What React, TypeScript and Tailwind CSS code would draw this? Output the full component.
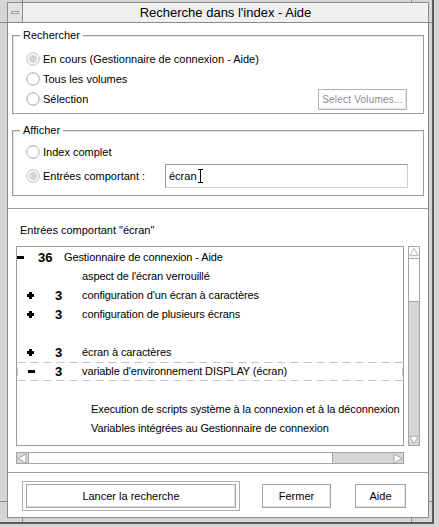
const font = "font-['Liberation_Sans',Arial,sans-serif]";

type Row =
  | { kind: "l1" | "l2"; sign: "plus" | "minus"; num: string; text: string; focus?: boolean }
  | { kind: "l2text" | "l3"; text: string }
  | { kind: "blank" };

const rows: Row[] = [
  { kind: "l1", sign: "minus", num: "36", text: "Gestionnaire de connexion - Aide" },
  { kind: "l2text", text: "aspect de l'écran verrouillé" },
  { kind: "l2", sign: "plus", num: "3", text: "configuration d'un écran à caractères" },
  { kind: "l2", sign: "plus", num: "3", text: "configuration de plusieurs écrans" },
  { kind: "blank" },
  { kind: "l2", sign: "plus", num: "3", text: "écran à caractères" },
  { kind: "l2", sign: "minus", num: "3", text: "variable d'environnement DISPLAY (écran)", focus: true },
  { kind: "blank" },
  { kind: "l3", text: "Execution de scripts système à la connexion et à la déconnexion" },
  { kind: "l3", text: "Variables intégrées au Gestionnaire de connexion" },
];

function Radio({ on }: { on?: boolean }) {
  return (
    <svg width="14" height="14" viewBox="0 0 14 14" className="shrink-0">
      <circle cx="7" cy="7" r="6.2" fill="#fff" stroke={on ? "#b8b8b8" : "#a4a4a4"} />
      {on && <circle cx="7" cy="7" r="4.2" fill="#d6d6d6" />}
    </svg>
  );
}

function Sign({ type }: { type: "plus" | "minus" }) {
  return (
    <svg width="7" height="7" viewBox="0 0 7 7">
      <rect x="0" y="2" width="7" height="3" fill="#000" />
      {type === "plus" && <rect x="2" y="0" width="3" height="7" fill="#000" />}
    </svg>
  );
}

function Arrow({ dir }: { dir: "up" | "down" | "left" | "right" }) {
  const pts = {
    up: "1,9 5.5,1 10,9",
    down: "1,2 5.5,10 10,2",
    left: "9,1 1,5.5 9,10",
    right: "2,1 10,5.5 2,10",
  }[dir];
  return (
    <svg width="11" height="11" viewBox="0 0 11 11">
      <polygon points={pts} fill="#fff" stroke="#a8a8a8" strokeWidth="1" />
    </svg>
  );
}

function GroupBox({ label, className, children }: { label: string; className: string; children: React.ReactNode }) {
  return (
    <div className={`relative mx-[4px] border border-[#9c9c9c] shadow-[inset_1px_1px_0_#e4e4e4] ${className}`}>
      <span className="absolute -top-[8px] left-[7px] bg-white px-[3px] text-[11px] leading-[14px] text-black">
        {label}
      </span>
      {children}
    </div>
  );
}

function Button({ label, className }: { label: string; className: string }) {
  return (
    <div
      className={`flex h-[24px] items-center justify-center border border-[#a4a4a4] bg-white text-[11px] text-black shadow-[inset_-1px_-1px_0_#e2e2e2] ${className}`}
    >
      {label}
    </div>
  );
}

export default function App() {
  return (
    <div className={`relative h-[527px] w-[439px] overflow-hidden bg-[#d6d6d6] ${font}`}>
      <div className="relative flex h-[524px] w-[434px] flex-col border-b-2 border-r-2 border-[#5a5a5a] bg-[#d6d6d6] pb-[4px] pl-[7px] pr-[3px] pt-[2px]">
        {/* frame resize ticks */}
        <div className="absolute left-[22px] top-0 h-[2px] w-px bg-[#8a8a8a]" />
        <div className="absolute right-[20px] top-0 h-[2px] w-px bg-[#8a8a8a]" />
        <div className="absolute bottom-0 left-[22px] h-[4px] w-px bg-[#8a8a8a]" />
        <div className="absolute bottom-0 right-[20px] h-[4px] w-px bg-[#8a8a8a]" />
        <div className="absolute left-0 top-[22px] h-px w-[7px] bg-[#8a8a8a]" />
        <div className="absolute bottom-[20px] left-0 h-px w-[7px] bg-[#8a8a8a]" />
        <div className="absolute right-0 top-[22px] h-px w-[3px] bg-[#8a8a8a]" />
        <div className="absolute bottom-[20px] right-0 h-px w-[3px] bg-[#8a8a8a]" />

        {/* title bar */}
        <div className="flex h-[20px] border-l border-t border-[#8e8e8e]">
          <div className="flex w-[15px] items-center justify-center border-r border-[#8e8e8e] bg-[#e2e2e2]">
            <div className="h-[3px] w-[8px] border border-[#9a9a9a] bg-[#f4f4f4]" />
          </div>
          <div className="flex flex-1 items-center justify-center border-r border-[#8e8e8e] bg-[#efefef] text-[13px] text-black">
            Recherche dans l'index - Aide
          </div>
        </div>

        {/* client area */}
        <div className="flex flex-1 flex-col whitespace-nowrap border border-[#8a8a8a] bg-white text-[11px] text-black">
          <GroupBox label="Rechercher" className="mt-[12px] h-[79px] pt-[13px]">
            <div className="flex h-[20px] items-center gap-[3px] pl-[13px]">
              <Radio on />
              <span>En cours (Gestionnaire de connexion - Aide)</span>
            </div>
            <div className="flex h-[20px] items-center gap-[3px] pl-[13px]">
              <Radio />
              <span>Tous les volumes</span>
            </div>
            <div className="flex h-[20px] items-center gap-[3px] pl-[13px] pr-[16px]">
              <Radio />
              <span>Sélection</span>
              <div className="ml-auto flex h-[21px] w-[89px] items-center justify-center border border-[#b4b4b4] text-[10px] tracking-[0.2px] text-[#8c8c8c] shadow-[inset_-1px_-1px_0_#e6e6e6]">
                Select Volumes...
              </div>
            </div>
          </GroupBox>

          <GroupBox label="Afficher" className="mt-[16px] h-[66px] pt-[11px]">
            <div className="flex h-[20px] items-center gap-[3px] pl-[13px]">
              <Radio />
              <span>Index complet</span>
            </div>
            <div className="mt-[2px] flex h-[24px] items-center gap-[3px] pl-[13px] pr-[15px]">
              <Radio on />
              <span>Entrées comportant :</span>
              <div className="ml-auto flex h-[24px] w-[243px] items-center border-b border-l border-r border-t border-b-[#cfcfcf] border-l-[#9a9a9a] border-r-[#cfcfcf] border-t-[#9a9a9a] pl-[3px]">
                <span>écran</span>
                <svg width="5" height="14" viewBox="0 0 5 14" className="ml-[1px]">
                  <path d="M0 0.5H5M2.5 0.5V13.5M0 13.5H5" stroke="#000" strokeWidth="1" fill="none" />
                </svg>
              </div>
            </div>
          </GroupBox>

          <div className="mt-[12px] h-px bg-[#9c9c9c]" />

          <div className="mt-[14px] h-[14px] pl-[12px] leading-[14px]">Entrées comportant "écran"</div>

          <div className="ml-[8px] mt-[9px] flex gap-[4px]">
            <div className="h-[200px] w-[388px] overflow-hidden border border-[#9c9c9c] pt-px tracking-[-0.1px]">
              {rows.map((r, i) => {
                if (r.kind === "blank") return <div key={i} className="h-[19px]" />;
                if (r.kind === "l2text")
                  return (
                    <div key={i} className="flex h-[19px] items-center pl-[65px]">
                      {r.text}
                    </div>
                  );
                if (r.kind === "l3")
                  return (
                    <div key={i} className="flex h-[19px] items-center pl-[74px]">
                      {r.text}
                    </div>
                  );
                const l1 = r.kind === "l1";
                return (
                  <div key={i} className={`relative flex h-[19px] items-center ${l1 ? "" : "pl-[10px]"}`}>
                    {r.focus && (
                      <svg className="absolute inset-0" width="386" height="19">
                        <rect x="0.5" y="0.5" width="385" height="18" fill="none" stroke="#c4c4c4" strokeDasharray="8 5" />
                      </svg>
                    )}
                    <div className={`flex items-center ${l1 ? "w-[21px]" : r.focus ? "w-[28px] pl-px" : "w-[28px]"}`}>
                      <Sign type={r.sign} />
                    </div>
                    <div className={`text-[13px] font-bold leading-none ${l1 ? "w-[26px]" : "w-[27px]"}`}>{r.num}</div>
                    <span className="relative">{r.text}</span>
                  </div>
                );
              })}
            </div>

            {/* vertical scrollbar */}
            <div className="flex h-[200px] w-[12px] flex-col border border-[#a4a4a4] bg-[#d6d6d6]">
              <div className="flex h-[11px] items-center justify-center bg-white">
                <Arrow dir="up" />
              </div>
              <div className="h-[44px] border-b border-t border-[#a4a4a4] bg-white" />
              <div className="flex-1" />
              <div className="flex h-[11px] items-center justify-center">
                <Arrow dir="down" />
              </div>
            </div>
          </div>

          {/* horizontal scrollbar */}
          <div className="ml-[8px] mt-[6px] flex h-[12px] w-[388px] border border-[#a4a4a4] bg-[#d6d6d6]">
            <div className="flex w-[11px] items-center justify-center">
              <Arrow dir="left" />
            </div>
            <div className="w-[305px] border-l border-r border-[#a4a4a4] bg-white" />
            <div className="flex-1" />
            <div className="flex w-[11px] items-center justify-center">
              <Arrow dir="right" />
            </div>
          </div>

          <div className="mt-[8px] h-px bg-[#9c9c9c]" />

          <div className="mt-[8px] flex h-[30px] items-center pl-[14px]">
            <div className="flex h-[30px] w-[218px] items-center border border-[#b0b0b0] px-[3px]">
              <Button label="Lancer la recherche" className="w-full" />
            </div>
            <Button label="Fermer" className="ml-[22px] w-[69px]" />
            <Button label="Aide" className="ml-[24px] w-[51px]" />
          </div>
        </div>
      </div>
    </div>
  );
}
